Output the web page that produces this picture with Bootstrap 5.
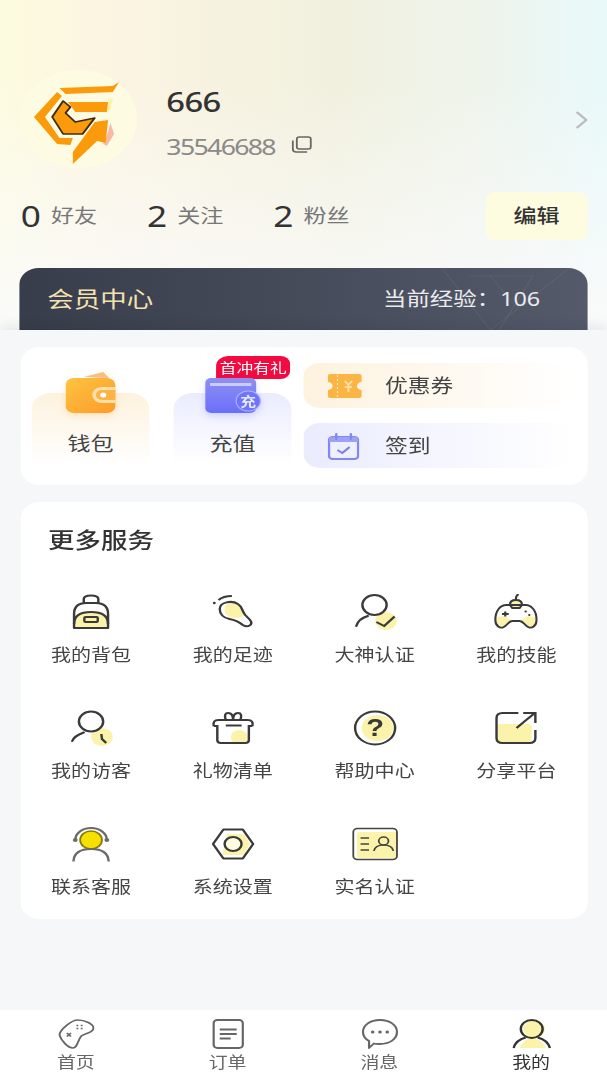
<!DOCTYPE html>
<html lang="zh-CN">
<head>
    <meta charset="UTF-8">
    <meta name="viewport" content="width=device-width, initial-scale=1.0">
    <title>我的</title>
    <link href="https://cdn.jsdelivr.net/npm/bootstrap@5.3.3/dist/css/bootstrap.min.css" rel="stylesheet">
    <style>
        html, body { height: 100%; overflow: hidden; background: #f6f7f8; }
        body { font-family: "Noto Sans", "Noto Sans CJK SC", sans-serif; color: #333; }

        .app-frame { width: 500px; height: 1080px; transform: scaleX(1.214); transform-origin: 0 0; display: flex; flex-direction: column; }

        .top-panel { height: 330px; flex: none; overflow: hidden; padding: 70px 16px 0; background: linear-gradient(to bottom, rgba(255,255,255,0) 25%, #fafafa 100%), linear-gradient(90deg, #fdfbdf 0%, #fbf4e2 20%, #f1f0de 55%, #eef4ec 80%, #e8f9fa 100%); }
        .avatar-disc { width: 97px; height: 98px; border-radius: 50%; background: #fdfbe2; flex: none; }
        .user-block { margin-left: 24px; padding-top: 14px; }
        .user-name { font-size: 27px; font-weight: 500; line-height: 36px; letter-spacing: -.5px; color: #333; }
        .user-id { font-size: 22px; line-height: 28px; letter-spacing: -1.4px; color: #8a8a8a; margin-top: 12px; }
        .copy-icon { margin-left: 14px; margin-top: -4px; }
        .go-arrow { margin-top: 2px; }

        .stats-row { margin-top: 24px; height: 48px; padding-left: 1px; }
        .stat-item { width: 104px; }
        .stat-num { font-size: 29px; line-height: 48px; color: #333; width: 25px; }
        .stat-label { font-size: 19px; color: #777; }
        .edit-btn { width: 84px; height: 48px; background: #fdfbe0; border: 0; border-radius: 8px; font-size: 19px; font-weight: 500; color: #333; padding: 0; }

        .member-bar { height: 62px; margin-top: 28px; padding: 0 39px 0 23px; border-radius: 16px 16px 0 0; background: linear-gradient(90deg, #383d4b, #555a6b); overflow: hidden; position: relative; }
        .member-title { font-size: 21.8px; color: #f5e1b0; }
        .member-exp { font-size: 19.3px; color: #ebebee; }
        .bar-lines { position: absolute; right: 10px; top: 0; }

        .lower-panel { flex: 1; background: #f6f7f8; padding: 17px 16.2px 0 16.6px; box-shadow: 0 -5px 10px rgba(0,0,0,.07); position: relative; }
        .panel-box { background: #fff; border-radius: 16px; border: 0; }
        .wallet-box { height: 138px; padding-left: 9.5px; }
        .tile { width: 97px; height: 72px; margin-top: 46px; margin-right: 20px; border-radius: 16px 16px 0 0; text-align: center; font-size: 19px; color: #444; position: relative; }
        .tile.is-gold { background: linear-gradient(to bottom, #fdf2de, #fff); }
        .tile.is-blue { background: linear-gradient(to bottom, #eaecfe, #fff); }
        .tile-icon { display: block; margin: -21px auto 17px; }
        .tile.is-gold .tile-icon { filter: drop-shadow(0 3px 3px rgba(253,170,60,.25)); }
        .tile.is-blue .tile-icon { filter: drop-shadow(0 3px 3px rgba(110,115,250,.25)); }
        .gift-tag { position: absolute; left: 35px; top: -37px; width: 61px; height: 23px; line-height: 23px; background: #f20a41; color: #fff; font-size: 13.8px; border-radius: 10px 8px 8px 0; white-space: nowrap; }
        .pill-stack { margin: 16px 0 0 -10px; width: 224px; gap: 15px; }
        .pill-link { height: 45px; border-radius: 14px; font-size: 18.8px; color: #444; padding: 1px 0 0 20px; }
        .pill-link.is-gold { background: linear-gradient(90deg, #fdf2de, #fff); }
        .pill-link.is-blue { background: linear-gradient(90deg, #eaecfe, #fff); }
        .pill-link svg { margin-right: 19px; }
        .pill-link.is-blue svg { margin-right: 21px; }

        .service-box { margin-top: 17px; height: 417px; padding-top: 23px; }
        .service-title { font-size: 21.8px; line-height: 30px; font-weight: 500; color: #333; padding-left: 23px; margin-bottom: 39px; }
        .service-item { height: 116px; text-align: center; }
        .service-item svg { display: block; margin: 0 auto 13px; }
        .service-label { font-size: 16.5px; line-height: 24px; color: #444; }

        .tab-bar { height: 70px; flex: none; background: #fff; position: relative; }
        .tab-item { text-align: center; padding-top: 9px; font-size: 15.6px; line-height: 22px; color: #666; }
        .tab-item svg { display: block; margin: 0 auto 2px; }
        .tab-item.is-active { color: #333; }
    </style>
</head>
<body>
<div class="app-frame">

    <div class="top-panel">
        <div class="d-flex align-items-start">
            <div class="avatar-disc">
                <svg width="97" height="98" viewBox="0 0 97 98">
                    <polygon points="75,53 78,64 72,76 69,74 73,62" fill="#f9b9a6"/>
                    <polygon points="73,30 77,28 75,40 72,42" fill="#fff3a8"/>
                    <polygon points="33,18 77,16 82,12 77,22 38,24" fill="#fb9a0a"/>
                    <polygon points="31,22 12,47 31,74 42,75 44,68 33,68 21,47 35,26" fill="#fb9a0a"/>
                    <polygon points="40,32 73,32 72,42 46,42" fill="#fb9a0a"/>
                    <polygon points="27,47 36,31 42,37 38,43 46,52 62,48 52,64 36,64" fill="#fb9a0a" stroke="#3f2c10" stroke-width="1.600" stroke-linejoin="round"/>
                    <polygon points="73,50 71,73 64,71 44,94 44,82 62,52" fill="#fb9a0a"/>
                </svg>
            </div>
            <div class="user-block flex-grow-1">
                <div class="user-name">666</div>
                <div class="user-id d-flex align-items-center">35546688
                    <svg class="copy-icon" width="17" height="17" viewBox="0 0 17 17" fill="none" stroke="#666" stroke-width="1.500">
                        <rect x="4.500" y="1" width="11.500" height="12" rx="2"/>
                        <path d="M1.200 4.500 V13 Q1.200 16 4 16 H13"/>
                    </svg>
                </div>
            </div>
            <svg class="go-arrow align-self-center" width="10" height="18" viewBox="0 0 10 18" fill="none" stroke="#bbb" stroke-width="2"><path d="M1 1 L9 9 L1 17"/></svg>
        </div>

        <div class="stats-row d-flex align-items-center">
            <div class="stat-item d-flex align-items-center"><span class="stat-num">0</span><span class="stat-label">好友</span></div>
            <div class="stat-item d-flex align-items-center"><span class="stat-num">2</span><span class="stat-label">关注</span></div>
            <div class="stat-item d-flex align-items-center"><span class="stat-num">2</span><span class="stat-label">粉丝</span></div>
            <button class="btn edit-btn ms-auto" type="button">编辑</button>
        </div>

        <div class="member-bar d-flex align-items-center justify-content-between">
            <span class="member-title">会员中心</span>
            <span class="member-exp">当前经验：106</span>
            <svg class="bar-lines" width="110" height="62" viewBox="0 0 110 62" fill="none" stroke="#fff" stroke-opacity=".06">
                <path d="M0 0 L40 62 L105 0"/>
                <path d="M22 8 H75 L47 62"/>
                <path d="M40 8 L62 40"/>
            </svg>
        </div>
    </div>

    <div class="lower-panel">
        <div class="panel-box wallet-box d-flex">
            <div class="tile is-gold">
                <svg class="tile-icon" width="42" height="41" viewBox="0 0 42 41">
                    <defs><linearGradient id="goldFill" x1="0" y1="0" x2="1" y2="1"><stop offset="0" stop-color="#fdc441"/><stop offset="1" stop-color="#fd9a2a"/></linearGradient></defs>
                    <path d="M15 5 L31 0 L36 6 Z" fill="#fbbf7a"/>
                    <rect x="0" y="6" width="41" height="35" rx="7" fill="url(#goldFill)"/>
                    <path d="M41 15 H30 A8 8 0 0 0 30 31 H41 Z" fill="#fde0a8"/>
                    <path d="M41 18 H30 A5 5 0 0 0 30 28 H41 Z" fill="#fdb346"/>
                    <circle cx="31" cy="23" r="2.500" fill="#fff"/>
                </svg>
                钱包
            </div>
            <div class="tile is-blue">
                <div class="gift-tag">首冲有礼</div>
                <svg class="tile-icon" width="46" height="41" viewBox="0 0 46 41">
                    <defs><linearGradient id="blueFill" x1="0" y1="0" x2="0" y2="1"><stop offset="0" stop-color="#8e90f0"/><stop offset="1" stop-color="#6a6ffb"/></linearGradient></defs>
                    <rect x="0" y="6" width="42" height="35" rx="5" fill="url(#blueFill)"/>
                    <rect x="4" y="11" width="34" height="3" fill="#c9cbf9"/>
                    <circle cx="35.500" cy="29" r="10" fill="#6f74fb" stroke="#aeb1f8"/>
                    <text x="35.500" y="34" text-anchor="middle" font-size="13" font-weight="700" fill="#e6e7ff">充</text>
                </svg>
                充值
            </div>
            <div class="pill-stack d-flex flex-column">
                <div class="pill-link is-gold d-flex align-items-center">
                    <svg width="28" height="24" viewBox="0 0 28 24">
                        <path d="M2 0 H26 Q28 0 28 2 V8 A4 4 0 0 0 28 16 V22 Q28 24 26 24 H2 Q0 24 0 22 V16 A4 4 0 0 0 0 8 V2 Q0 0 2 0Z" fill="#fbb544"/>
                        <path d="M8 1 V23" stroke="#fde3b0" stroke-width="1" stroke-dasharray="2 2"/>
                        <path d="M14 7 L17 11 L20 7 M17 11 V18 M14 13 H20" stroke="#fde3b0" stroke-width="1.600" fill="none"/>
                    </svg>
                    优惠券
                </div>
                <div class="pill-link is-blue d-flex align-items-center">
                    <svg width="26" height="27" viewBox="0 0 26 27" fill="none">
                        <rect x="1" y="4" width="24" height="22" rx="3" fill="#eef0ff" stroke="#8388f0" stroke-width="2"/>
                        <path d="M1 9 V6 Q1 4 3 4 H23 Q25 4 25 6 V9 Z" fill="#9ea2f4"/>
                        <path d="M7 1 V6 M19 1 V6" stroke="#8388f0" stroke-width="2" stroke-linecap="round"/>
                        <path d="M8 17 L12 20 L18 14" stroke="#7b80ee" stroke-width="1.800"/>
                    </svg>
                    签到
                </div>
            </div>
        </div>

        <div class="panel-box service-box">
            <div class="service-title">更多服务</div>
            <div class="row g-0">
                <div class="col-3 service-item">
                    <svg width="36" height="36" viewBox="0 0 36 36" fill="none" stroke="#3a3a3a" stroke-width="2">
                        <path d="M5 33 V29 Q5 18 18 18 Q31 18 31 29 V33 Z" fill="#fcf3ab" stroke="none"/>
                        <path d="M12 9 V5 Q12 1.500 18 1.500 Q24 1.500 24 5 V9"/>
                        <path d="M4 34 V20 Q4 9 14 9 H22 Q32 9 32 20 V34 Z" stroke-linejoin="round"/>
                        <path d="M4 30 Q4 18 18 18 Q32 18 32 30"/>
                        <rect x="12.500" y="23" width="11" height="5" rx="1"/>
                    </svg>
                    <div class="service-label">我的背包</div>
                </div>
                <div class="col-3 service-item">
                    <svg width="36" height="36" viewBox="0 0 36 36" fill="none" stroke="#3a3a3a" stroke-width="2">
                        <path d="M11 14 C11 9 18 8 22 11 C25 14 25 18 27 21 C24 25 17 25 14 22 C11 20 11 17 11 14Z" fill="#fcf3ab" stroke="none"/>
                        <path d="M7 15 C7 8 17 6 22 10 C26 13 25 17 28 21 L32 26 C35 31 30 34 26 31 C23 28 20 26 15 25 C10 24 7 20 7 15Z"/>
                        <circle cx="2.500" cy="9" r="1.200" fill="#3a3a3a" stroke="none"/>
                        <path d="M6 6 Q10 2 17 2"/>
                    </svg>
                    <div class="service-label">我的足迹</div>
                </div>
                <div class="col-3 service-item">
                    <svg width="36" height="36" viewBox="0 0 36 36" fill="none" stroke="#3a3a3a" stroke-width="2">
                        <circle cx="27" cy="27" r="9" fill="#fcf3ab" stroke="none"/>
                        <circle cx="17.500" cy="11" r="10"/>
                        <path d="M2.500 32 Q4 25 12 22" stroke-linecap="round"/>
                        <path d="M19 28 L25.500 32 L34 22.500"/>
                    </svg>
                    <div class="service-label">大神认证</div>
                </div>
                <div class="col-3 service-item">
                    <svg width="36" height="36" viewBox="0 0 36 36" fill="none" stroke="#3a3a3a" stroke-width="1.800">
                        <path d="M2 23 C2 30 4 34 8 33 C11 31 12 27 15 27 L8 22 Z" fill="#fcf3ab" stroke="none"/>
                        <path d="M34 23 C34 30 32 34 28 33 C25 31 24 27 21 27 L28 22 Z" fill="#fcf3ab" stroke="none"/>
                        <path d="M13 11 Q13 6 18 6 Q23 6 23 11 L21 14 H15 Z" fill="#fcf3ab"/>
                        <path d="M10 11 H26 C31 11 35 17 35 26 C35 32 31 35 28 33 C25 31 24 27 21 27 H15 C12 27 11 31 8 33 C5 35 1 32 1 26 C1 17 5 11 10 11Z"/>
                        <path d="M18 6 V4 Q18 2 20 0"/>
                        <path d="M6.500 20 H12 M9.200 17.500 V22.500"/>
                        <circle cx="26" cy="17.500" r="1" fill="#3a3a3a" stroke="none"/>
                        <circle cx="29" cy="21" r="1" fill="#3a3a3a" stroke="none"/>
                    </svg>
                    <div class="service-label">我的技能</div>
                </div>

                <div class="col-3 service-item">
                    <svg width="36" height="36" viewBox="0 0 36 36" fill="none" stroke="#3a3a3a" stroke-width="2">
                        <circle cx="27" cy="27" r="9" fill="#fcf3ab" stroke="none"/>
                        <circle cx="18" cy="11.500" r="10"/>
                        <path d="M2.500 31 Q4 26 12 22.500" stroke-linecap="round"/>
                        <path d="M26.500 24 L27 29 L30.500 33"/>
                    </svg>
                    <div class="service-label">我的访客</div>
                </div>
                <div class="col-3 service-item">
                    <svg width="36" height="36" viewBox="0 0 36 36" fill="none" stroke="#3a3a3a" stroke-width="2">
                        <circle cx="23" cy="27" r="7" fill="#fcf3ab" stroke="none"/>
                        <path d="M12 10 Q10 3 14 3 Q18 3 18 10 Q18 3 22 3 Q26 3 24 10"/>
                        <path d="M2 16 Q1 10 6 10 H30 Q35 10 34 16"/>
                        <path d="M2 16 H4.500 M31.500 16 H34"/>
                        <path d="M5 15 V30 Q5 33 8 33 H28 Q31 33 31 30 V15"/>
                        <path d="M12 15.500 H25"/>
                    </svg>
                    <div class="service-label">礼物清单</div>
                </div>
                <div class="col-3 service-item">
                    <svg width="36" height="36" viewBox="0 0 36 36" fill="none" stroke="#3a3a3a" stroke-width="2">
                        <circle cx="20" cy="18" r="13" fill="#fcf3ab" stroke="none"/>
                        <circle cx="18" cy="18" r="16.500"/>
                        <text x="18" y="26" text-anchor="middle" font-family="Liberation Sans, sans-serif" font-size="24" font-weight="700" fill="#3a3a3a" stroke="none">?</text>
                    </svg>
                    <div class="service-label">帮助中心</div>
                </div>
                <div class="col-3 service-item">
                    <svg width="36" height="36" viewBox="0 0 36 36" fill="none" stroke="#3a3a3a" stroke-width="2">
                        <rect x="3" y="14" width="28" height="19" rx="2" fill="#fcf3ab" stroke="none"/>
                        <path d="M20 3 H7 Q2 3 2 8 V28 Q2 33 7 33 H29 Q34 33 34 28 V20"/>
                        <path d="M18.500 18 L33 3.500 M24 3 H34 V13"/>
                    </svg>
                    <div class="service-label">分享平台</div>
                </div>

                <div class="col-3 service-item">
                    <svg width="36" height="36" viewBox="0 0 36 36" fill="none" stroke="#6a6a6a" stroke-width="2">
                        <path d="M5 14 A13 12 0 0 1 31 14"/>
                        <circle cx="5" cy="14" r="2" fill="#6a6a6a" stroke="none"/>
                        <circle cx="31" cy="14" r="2" fill="#6a6a6a" stroke="none"/>
                        <circle cx="18" cy="14" r="9" fill="#f5e000" stroke="#8a7a10" stroke-width="1.500"/>
                        <path d="M3.500 35.500 Q4 23 18 23 Q32 23 32.500 35.500"/>
                    </svg>
                    <div class="service-label">联系客服</div>
                </div>
                <div class="col-3 service-item">
                    <svg width="36" height="36" viewBox="0 0 36 36" fill="none" stroke="#3a3a3a" stroke-width="2">
                        <path d="M13 8 H27 L32 18 L27 29 H9 Z" fill="#fcf3ab" stroke="none"/>
                        <path d="M10 3.500 H26 L34.500 18 L26 32.500 H10 L1.500 18 Z" stroke-linejoin="round"/>
                        <circle cx="18" cy="18" r="7" fill="#fffbe0"/>
                    </svg>
                    <div class="service-label">系统设置</div>
                </div>
                <div class="col-3 service-item">
                    <svg width="38" height="36" viewBox="0 0 38 36" fill="none" stroke="#444" stroke-width="1.500">
                        <rect x="4" y="6" width="33" height="26" rx="2" fill="#fcf3ab" stroke="none"/>
                        <rect x="1" y="2.500" width="36" height="31" rx="3.500"/>
                        <path d="M7 12 H14 M7 18 H14 M7 24 H14"/>
                        <circle cx="26" cy="15" r="4"/>
                        <path d="M18 25 Q19 19 26 19 Q33 19 34 25"/>
                    </svg>
                    <div class="service-label">实名认证</div>
                </div>
            </div>
        </div>
    </div>

    <div class="tab-bar row g-0">
        <div class="col-3 tab-item">
            <svg width="30" height="30" viewBox="0 0 30 30" fill="none" stroke="#666" stroke-width="1.600">
                <path d="M16 1 C22 1 29 5 29 9 C29 14 22 14 19 17 C16 21 16 29 12 29 C8 29 2 21 1 16 C1 11 11 1 16 1Z"/>
                <path d="M7 14 L10.500 17.500 M10.500 14 L7 17.500" stroke-width="1.400"/>
                <path d="M15 6.500 H16.500 M18.500 6.500 H20 M15 9.500 H16.500 M18.500 9.500 H20" stroke-width="1.500"/>
            </svg>
            首页
        </div>
        <div class="col-3 tab-item">
            <svg width="30" height="30" viewBox="0 0 30 30" fill="none" stroke="#666" stroke-width="1.800">
                <rect x="3" y="1" width="24" height="28" rx="3"/>
                <path d="M8 10.500 H22 M8 15 H22 M8 19.500 H17"/>
            </svg>
            订单
        </div>
        <div class="col-3 tab-item">
            <svg width="30" height="30" viewBox="0 0 30 30" fill="none" stroke="#666" stroke-width="1.800">
                <path d="M15 1 C23 1 29 6 29 13 C29 20 23 25 15 25 C13 25 11 25 10 24.500 L6 29 V22 C3 20 1 17 1 13 C1 6 7 1 15 1Z" stroke-linejoin="round"/>
                <circle cx="9" cy="13" r="1.500" fill="#666" stroke="none"/>
                <circle cx="15" cy="13" r="1.500" fill="#666" stroke="none"/>
                <circle cx="21" cy="13" r="1.500" fill="#666" stroke="none"/>
            </svg>
            消息
        </div>
        <div class="col-3 tab-item is-active">
            <svg width="32" height="30" viewBox="0 0 32 30" fill="none" stroke="#333" stroke-width="2">
                <circle cx="18" cy="10" r="9" fill="#fcf3ab" stroke="none"/>
                <path d="M6 29 Q10 19 16 19 Q23 19 28 29 Z" fill="#fcf3ab" stroke="none"/>
                <circle cx="16" cy="10" r="9"/>
                <path d="M1 29 Q3 21 11 18.500 M31 29 Q29 21 21 18.500"/>
            </svg>
            我的
        </div>
    </div>

</div>
<script src="https://cdn.jsdelivr.net/npm/bootstrap@5.3.3/dist/js/bootstrap.bundle.min.js"></script>
</body>
</html>
